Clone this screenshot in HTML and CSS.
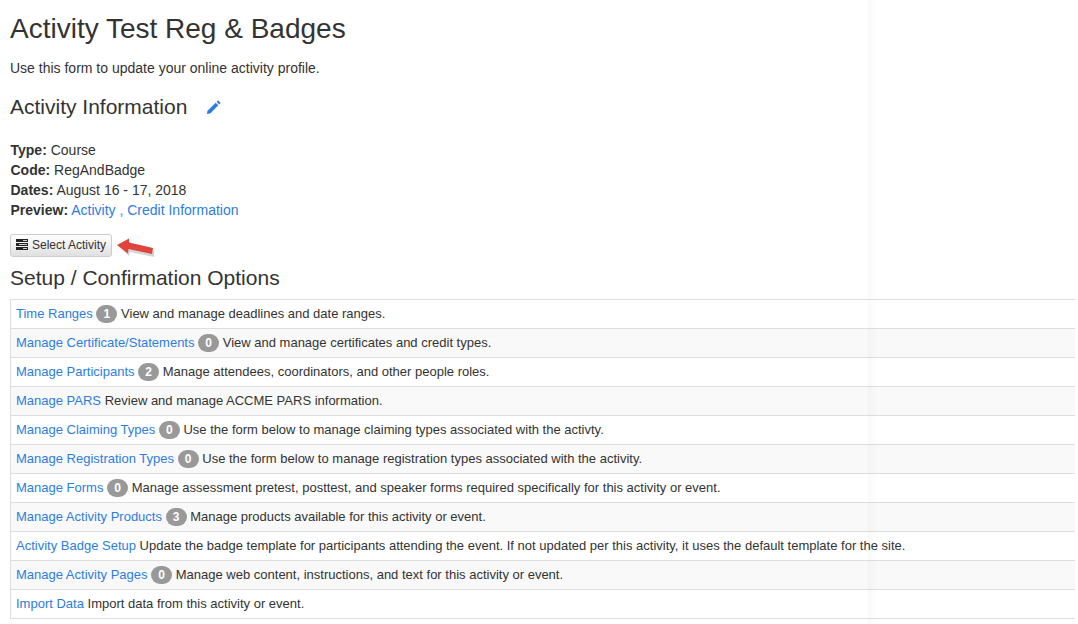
FILE: index.html
```html
<!DOCTYPE html>
<html lang="en">
 <head>
  <meta charset="utf-8">
  <title>Activity Test Reg &amp; Badges</title>
  <link rel="stylesheet" href="styles.css">
 </head>
 <body>

  <div class="fold"></div>

  <h1>Activity Test Reg &amp; Badges</h1>
  <p class="intro">Use this form to update your online activity profile.</p>

  <h2 class="info-title">Activity Information
    <a href="#" class="edit">
      <svg width="15" height="15" viewBox="0 0 17 17"><path fill="#2d7de0" d="M1 16l.7-3.800L11 3l3 3-9.200 9.300z"/><path fill="#2d7de0" d="M12 2l1-1q.8-.6 1.500 0l1.500 1.500q.6.700 0 1.500l-1 1z"/></svg>
    </a>
  </h2>

  <div class="details">
    <div><b>Type:</b> Course</div>
    <div><b>Code:</b> RegAndBadge</div>
    <div><b>Dates:</b> August 16 - 17, 2018</div>
    <div><b>Preview:</b> <a href="#">Activity</a> <a href="#">, Credit Information</a></div>
  </div>

  <div class="button-bar">
    <button class="btn">
      <svg width="12" height="11" viewBox="0 0 12 11"><path fill="#222" d="M0 0h12v3H0zM0 4h12v3H0zM0 8h12v3H0z"/><path fill="#ccc" d="M7 1h4v1H7zM3 5h8v1H3zM7 9h4v1H7z"/></svg>
      Select Activity
    </button>
    <svg class="arrow" width="40" height="24" viewBox="0 -4 40 24"><path fill="#888" opacity="0.35" d="M3 9 L14 3 L14 7 L38 13 L38 19 L14 14 L13 18 Z"/><path fill="#e0443e" d="M1 7 L13 0.500 L13 4.500 L37 10 L36 16 L12.500 11 L12 15.500 Z"/></svg>
  </div>

  <h2 class="setup-title">Setup / Confirmation Options</h2>

  <div class="options">
    <div class="row"><a href="#">Time Ranges</a> <span class="badge">1</span> View and manage deadlines and date ranges.</div>
    <div class="row"><a href="#">Manage Certificate/Statements</a> <span class="badge">0</span> View and manage certificates and credit types.</div>
    <div class="row"><a href="#">Manage Participants</a> <span class="badge">2</span> Manage attendees, coordinators, and other people roles.</div>
    <div class="row"><a href="#">Manage PARS</a> Review and manage ACCME PARS information.</div>
    <div class="row"><a href="#">Manage Claiming Types</a> <span class="badge">0</span> Use the form below to manage claiming types associated with the activty.</div>
    <div class="row"><a href="#">Manage Registration Types</a> <span class="badge">0</span> Use the form below to manage registration types associated with the activity.</div>
    <div class="row"><a href="#">Manage Forms</a> <span class="badge">0</span> Manage assessment pretest, posttest, and speaker forms required specifically for this activity or event.</div>
    <div class="row"><a href="#">Manage Activity Products</a> <span class="badge">3</span> Manage products available for this activity or event.</div>
    <div class="row"><a href="#">Activity Badge Setup</a> Update the badge template for participants attending the event. If not updated per this activity, it uses the default template for the site.</div>
    <div class="row"><a href="#">Manage Activity Pages</a> <span class="badge">0</span> Manage web content, instructions, and text for this activity or event.</div>
    <div class="row"><a href="#">Import Data</a> Import data from this activity or event.</div>
  </div>

 </body>
</html>
```

FILE: styles.css
```css
*{box-sizing:border-box}
html {background:#fff}
body {margin:0;padding:0 3px 0 10px;font-family:"Liberation Sans",Arial,sans-serif;font-size:14px;line-height:20px;color:#333;overflow:hidden}
a {color:#2d7de0;text-decoration:none}
h1,h2 {margin:0;font-weight:500;line-height:1.1}
h1 {font-size:28px;padding-top:14px}
h2 {font-size:21px}
.intro {margin:13px 0 0}
.info-title {margin-top:17px}
.edit {margin-left:13px}
.edit svg {vertical-align:-1px}
.details {margin-top:22px;padding-left:.5px}
.button-bar {display:flex;align-items:center;margin-top:14px}
.btn {display:flex;align-items:center;gap:4px;height:23px;padding:0 5px 2px;font:12px "Liberation Sans",Arial,sans-serif;color:#333;background:linear-gradient(#fff,#e0e0e0);border:1px solid #ccc;border-radius:3px}
.arrow {margin:0 0 0 4px}
.setup-title {margin-top:8px}
.options {margin-top:10px;border-bottom:1px solid #ddd;font-size:13px}
.row {height:29px;padding:4px 5px;border:1px solid #ddd;border-width:1px 0 0 1px}
.row:nth-child(even) {background:#f9f9f9}
.badge {display:inline-block;min-width:21px;padding:3px 7px;font-size:12px;font-weight:700;line-height:1;color:#fff;text-align:center;background:#999;border-radius:10px}
.fold {position:absolute;top:0;bottom:0;left:868px;width:10px;background:linear-gradient(to right,rgba(0,0,0,0.025),rgba(0,0,0,0))}
```
